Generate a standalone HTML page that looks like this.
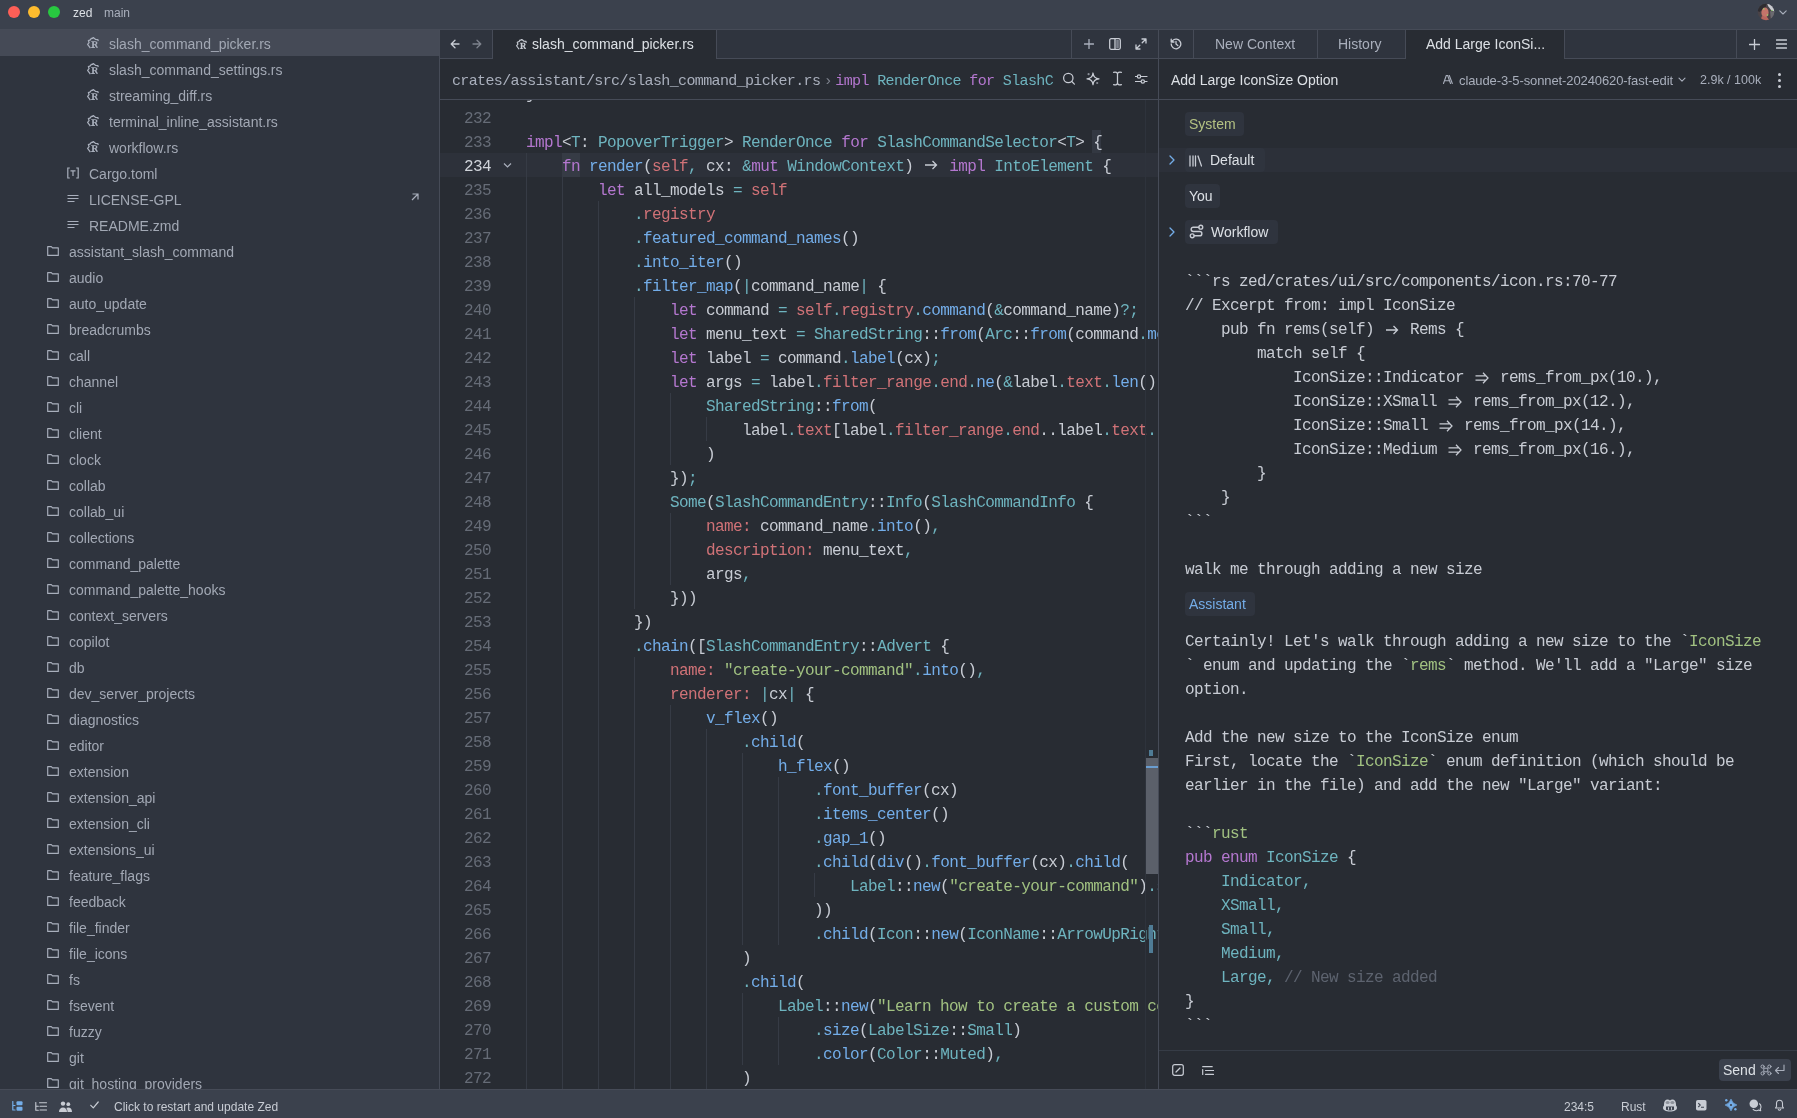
<!DOCTYPE html>
<html><head><meta charset="utf-8"><style>
*{box-sizing:border-box}
html,body{margin:0;padding:0;width:1797px;height:1118px;overflow:hidden;background:#282c33;font-family:"Liberation Sans",sans-serif;-webkit-font-smoothing:antialiased}
.abs{position:absolute}
svg.abs{display:block}
#title{will-change:transform;position:absolute;left:0;top:0;width:1797px;height:30px;background:#3b414d;border-bottom:1px solid #464b57}
.dot{position:absolute;top:6px;width:12px;height:12px;border-radius:50%}
#side{will-change:transform;position:absolute;left:0;top:30px;width:440px;height:1059px;background:#2f343e;border-right:1px solid #464b57;overflow:hidden}
.row{position:absolute;left:0;width:439px;height:26px}
.row.sel{background:#454a56}
.icw{position:absolute;top:7px;width:12px;height:12px}
.ic{display:block}
.nm{position:absolute;top:1px;line-height:26px;font-size:14px;color:#a2a8b4;white-space:nowrap}
#edtabs{will-change:transform;position:absolute;left:440px;top:30px;width:718px;height:29px;background:#2f343e;border-bottom:1px solid #464b57}
#edtool{will-change:transform;position:absolute;left:440px;top:59px;width:718px;height:41px;background:#282c33;border-bottom:1px solid #464b57}
#code{will-change:transform;position:absolute;left:440px;top:100px;width:718px;height:989px;background:#282c33;overflow:hidden;font-family:"Liberation Mono",monospace;font-size:16px;letter-spacing:-0.6px}
.mono14{font-family:"Liberation Mono",monospace;font-size:15px;letter-spacing:-0.63px;white-space:pre}
.cl{position:absolute;left:0;width:718px;height:24px;line-height:29px;white-space:pre;color:#c8ccd4}
.actbg{position:absolute;left:0;width:718px;height:24px;background:#2d313a}
.guide{position:absolute;width:1px;background:#363b45}
.ln{position:absolute;left:0;width:51px;text-align:right;color:#666c77}
.ln.act{color:#d0d4da}
.src{position:absolute;left:86px;top:0}
.lg{display:inline-block;width:18px;height:24px;vertical-align:top}
.lg svg{display:block;margin-top:1px}
.k{color:#b477cf}.f{color:#73ade9}.t{color:#6eb4bf}.p{color:#d07277}.s{color:#d07277}.o{color:#6eb4bf}.g{color:#a1c181}.c{color:#5d636f}
#divider{position:absolute;left:1158px;top:30px;width:1px;height:1059px;background:#464b57}
#rtabs{will-change:transform;position:absolute;left:1159px;top:30px;width:638px;height:29px;background:#2f343e;border-bottom:1px solid #464b57}
#rtool{will-change:transform;position:absolute;left:1159px;top:59px;width:638px;height:41px;background:#282c33;border-bottom:1px solid #464b57}
#rbody{will-change:transform;position:absolute;left:1159px;top:100px;width:638px;height:989px;background:#282c33;overflow:hidden}
.rl{position:absolute;left:26px;height:24px;line-height:24px;white-space:pre;font-family:"Liberation Mono",monospace;font-size:16px;letter-spacing:-0.6px;color:#c8ccd4}
.badge{position:absolute;height:24px;line-height:24px;padding-left:4px;border-radius:4px;background:#2f343e;font-size:14px;white-space:nowrap}
#status{will-change:transform;position:absolute;left:0;top:1089px;width:1797px;height:29px;background:#3b414d;border-top:1px solid #464b57}
.ui{font-size:14px;white-space:nowrap}
</style></head><body>
<div id="title">
 <div class="dot" style="left:8px;background:#fe5f57"></div>
 <div class="dot" style="left:28px;background:#febc2e"></div>
 <div class="dot" style="left:48px;background:#28c840"></div>
 <span class="abs" style="left:73px;top:0px;line-height:26px;color:#dce0e5;font-size:12px">zed</span>
 <span class="abs" style="left:104px;top:0px;line-height:26px;color:#a9afbc;font-size:12px">main</span>
 <svg class="abs" style="left:1757px;top:3px" width="18" height="18" viewBox="0 0 18 18"><defs><clipPath id="avc"><circle cx="9" cy="9" r="8.3"/></clipPath></defs><g clip-path="url(#avc)"><rect width="18" height="18" fill="#4a4347"/><path d="M0 0h10L8 6 2 9 0 7z" fill="#2e2c30"/><path d="M10 0h8v9l-4-2-3-4z" fill="#c9cbd1"/><ellipse cx="8" cy="9.5" rx="3.6" ry="5" fill="#c4746a"/><path d="M3 18l2-5 5 1 3 4z" fill="#b8665e"/><path d="M13 8l5 1v9h-4z" fill="#6b6a70"/><circle cx="6.8" cy="6" r=".8" fill="#8fdc6a"/><circle cx="10.5" cy="12" r=".8" fill="#8fdc6a"/><circle cx="15" cy="7.5" r=".7" fill="#8fdc6a"/></g></svg>
 <svg class="abs" style="left:1779px;top:10px" width="8" height="5" viewBox="0 0 8 5"><path d="M.8 .8l3.2 3.2 3.2-3.2" fill="none" stroke="#a9afbc" stroke-width="1.1" stroke-linecap="round" stroke-linejoin="round"/></svg>
</div>
<div id="side"><div class="row sel" style="top:0px"><span class="icw" style="left:87px"><svg class="ic" width="12" height="12" viewBox="0 0 12 12"><path d="M3.4 11.2L.6 7.4 2.1 5.7 1.4 3.6 3.3 2.8 4.3 1.3h1.3L6.2.4l1.2 1 1.2 1.1 2.3.1.3 1.6" fill="none" stroke="#a9afbc" stroke-width="1.25" stroke-linejoin="round"/><path d="M4.2 4.2h3.9c1.5 0 2.3.7 2.3 1.8 0 .9-.6 1.4-1.2 1.6l1.9 3.2H9.3L7.7 8.1H6.9v2h1v.8H4.2v-.8h1V5H4.2zM6.9 5v2.2h1.1c.6 0 .9-.4.9-1.1S8.6 5 8 5z" fill="#a9afbc"/></svg></span><span class="nm" style="left:109px">slash_command_picker.rs</span></div>
<div class="row" style="top:26px"><span class="icw" style="left:87px"><svg class="ic" width="12" height="12" viewBox="0 0 12 12"><path d="M3.4 11.2L.6 7.4 2.1 5.7 1.4 3.6 3.3 2.8 4.3 1.3h1.3L6.2.4l1.2 1 1.2 1.1 2.3.1.3 1.6" fill="none" stroke="#a9afbc" stroke-width="1.25" stroke-linejoin="round"/><path d="M4.2 4.2h3.9c1.5 0 2.3.7 2.3 1.8 0 .9-.6 1.4-1.2 1.6l1.9 3.2H9.3L7.7 8.1H6.9v2h1v.8H4.2v-.8h1V5H4.2zM6.9 5v2.2h1.1c.6 0 .9-.4.9-1.1S8.6 5 8 5z" fill="#a9afbc"/></svg></span><span class="nm" style="left:109px">slash_command_settings.rs</span></div>
<div class="row" style="top:52px"><span class="icw" style="left:87px"><svg class="ic" width="12" height="12" viewBox="0 0 12 12"><path d="M3.4 11.2L.6 7.4 2.1 5.7 1.4 3.6 3.3 2.8 4.3 1.3h1.3L6.2.4l1.2 1 1.2 1.1 2.3.1.3 1.6" fill="none" stroke="#a9afbc" stroke-width="1.25" stroke-linejoin="round"/><path d="M4.2 4.2h3.9c1.5 0 2.3.7 2.3 1.8 0 .9-.6 1.4-1.2 1.6l1.9 3.2H9.3L7.7 8.1H6.9v2h1v.8H4.2v-.8h1V5H4.2zM6.9 5v2.2h1.1c.6 0 .9-.4.9-1.1S8.6 5 8 5z" fill="#a9afbc"/></svg></span><span class="nm" style="left:109px">streaming_diff.rs</span></div>
<div class="row" style="top:78px"><span class="icw" style="left:87px"><svg class="ic" width="12" height="12" viewBox="0 0 12 12"><path d="M3.4 11.2L.6 7.4 2.1 5.7 1.4 3.6 3.3 2.8 4.3 1.3h1.3L6.2.4l1.2 1 1.2 1.1 2.3.1.3 1.6" fill="none" stroke="#a9afbc" stroke-width="1.25" stroke-linejoin="round"/><path d="M4.2 4.2h3.9c1.5 0 2.3.7 2.3 1.8 0 .9-.6 1.4-1.2 1.6l1.9 3.2H9.3L7.7 8.1H6.9v2h1v.8H4.2v-.8h1V5H4.2zM6.9 5v2.2h1.1c.6 0 .9-.4.9-1.1S8.6 5 8 5z" fill="#a9afbc"/></svg></span><span class="nm" style="left:109px">terminal_inline_assistant.rs</span></div>
<div class="row" style="top:104px"><span class="icw" style="left:87px"><svg class="ic" width="12" height="12" viewBox="0 0 12 12"><path d="M3.4 11.2L.6 7.4 2.1 5.7 1.4 3.6 3.3 2.8 4.3 1.3h1.3L6.2.4l1.2 1 1.2 1.1 2.3.1.3 1.6" fill="none" stroke="#a9afbc" stroke-width="1.25" stroke-linejoin="round"/><path d="M4.2 4.2h3.9c1.5 0 2.3.7 2.3 1.8 0 .9-.6 1.4-1.2 1.6l1.9 3.2H9.3L7.7 8.1H6.9v2h1v.8H4.2v-.8h1V5H4.2zM6.9 5v2.2h1.1c.6 0 .9-.4.9-1.1S8.6 5 8 5z" fill="#a9afbc"/></svg></span><span class="nm" style="left:109px">workflow.rs</span></div>
<div class="row" style="top:130px"><span class="icw" style="left:67px"><svg class="ic" width="12" height="12" viewBox="0 0 12 12"><path d="M2.8 1H.8v10h2M9.2 1h2v10h-2M3.5 3.8h5M6 3.8V9" fill="none" stroke="#a9afbc" stroke-width="1.2"/></svg></span><span class="nm" style="left:89px">Cargo.toml</span></div>
<div class="row" style="top:156px"><span class="icw" style="left:67px"><svg class="ic" width="12" height="12" viewBox="0 0 12 12"><path d="M.5 2.5h11M.5 5.5h11M.5 8.5h7" fill="none" stroke="#a9afbc" stroke-width="1.2"/></svg></span><span class="nm" style="left:89px">LICENSE-GPL</span><svg style="position:absolute;left:411px;top:7px" width="8" height="8" viewBox="0 0 8 8"><path d="M1 7L7 1M1.5 1H7v5.5" fill="none" stroke="#a9afbc" stroke-width="1.2"/></svg></div>
<div class="row" style="top:182px"><span class="icw" style="left:67px"><svg class="ic" width="12" height="12" viewBox="0 0 12 12"><path d="M.5 2.5h11M.5 5.5h11M.5 8.5h7" fill="none" stroke="#a9afbc" stroke-width="1.2"/></svg></span><span class="nm" style="left:89px">README.zmd</span></div>
<div class="row" style="top:208px"><span class="icw" style="left:47px"><svg class="ic" width="12" height="12" viewBox="0 0 12 12"><path d="M.7 1.6h3.6l1.2 1.3h5.8v7.5H.7z" fill="none" stroke="#a9afbc" stroke-width="1.15" stroke-linejoin="round"/></svg></span><span class="nm" style="left:69px">assistant_slash_command</span></div>
<div class="row" style="top:234px"><span class="icw" style="left:47px"><svg class="ic" width="12" height="12" viewBox="0 0 12 12"><path d="M.7 1.6h3.6l1.2 1.3h5.8v7.5H.7z" fill="none" stroke="#a9afbc" stroke-width="1.15" stroke-linejoin="round"/></svg></span><span class="nm" style="left:69px">audio</span></div>
<div class="row" style="top:260px"><span class="icw" style="left:47px"><svg class="ic" width="12" height="12" viewBox="0 0 12 12"><path d="M.7 1.6h3.6l1.2 1.3h5.8v7.5H.7z" fill="none" stroke="#a9afbc" stroke-width="1.15" stroke-linejoin="round"/></svg></span><span class="nm" style="left:69px">auto_update</span></div>
<div class="row" style="top:286px"><span class="icw" style="left:47px"><svg class="ic" width="12" height="12" viewBox="0 0 12 12"><path d="M.7 1.6h3.6l1.2 1.3h5.8v7.5H.7z" fill="none" stroke="#a9afbc" stroke-width="1.15" stroke-linejoin="round"/></svg></span><span class="nm" style="left:69px">breadcrumbs</span></div>
<div class="row" style="top:312px"><span class="icw" style="left:47px"><svg class="ic" width="12" height="12" viewBox="0 0 12 12"><path d="M.7 1.6h3.6l1.2 1.3h5.8v7.5H.7z" fill="none" stroke="#a9afbc" stroke-width="1.15" stroke-linejoin="round"/></svg></span><span class="nm" style="left:69px">call</span></div>
<div class="row" style="top:338px"><span class="icw" style="left:47px"><svg class="ic" width="12" height="12" viewBox="0 0 12 12"><path d="M.7 1.6h3.6l1.2 1.3h5.8v7.5H.7z" fill="none" stroke="#a9afbc" stroke-width="1.15" stroke-linejoin="round"/></svg></span><span class="nm" style="left:69px">channel</span></div>
<div class="row" style="top:364px"><span class="icw" style="left:47px"><svg class="ic" width="12" height="12" viewBox="0 0 12 12"><path d="M.7 1.6h3.6l1.2 1.3h5.8v7.5H.7z" fill="none" stroke="#a9afbc" stroke-width="1.15" stroke-linejoin="round"/></svg></span><span class="nm" style="left:69px">cli</span></div>
<div class="row" style="top:390px"><span class="icw" style="left:47px"><svg class="ic" width="12" height="12" viewBox="0 0 12 12"><path d="M.7 1.6h3.6l1.2 1.3h5.8v7.5H.7z" fill="none" stroke="#a9afbc" stroke-width="1.15" stroke-linejoin="round"/></svg></span><span class="nm" style="left:69px">client</span></div>
<div class="row" style="top:416px"><span class="icw" style="left:47px"><svg class="ic" width="12" height="12" viewBox="0 0 12 12"><path d="M.7 1.6h3.6l1.2 1.3h5.8v7.5H.7z" fill="none" stroke="#a9afbc" stroke-width="1.15" stroke-linejoin="round"/></svg></span><span class="nm" style="left:69px">clock</span></div>
<div class="row" style="top:442px"><span class="icw" style="left:47px"><svg class="ic" width="12" height="12" viewBox="0 0 12 12"><path d="M.7 1.6h3.6l1.2 1.3h5.8v7.5H.7z" fill="none" stroke="#a9afbc" stroke-width="1.15" stroke-linejoin="round"/></svg></span><span class="nm" style="left:69px">collab</span></div>
<div class="row" style="top:468px"><span class="icw" style="left:47px"><svg class="ic" width="12" height="12" viewBox="0 0 12 12"><path d="M.7 1.6h3.6l1.2 1.3h5.8v7.5H.7z" fill="none" stroke="#a9afbc" stroke-width="1.15" stroke-linejoin="round"/></svg></span><span class="nm" style="left:69px">collab_ui</span></div>
<div class="row" style="top:494px"><span class="icw" style="left:47px"><svg class="ic" width="12" height="12" viewBox="0 0 12 12"><path d="M.7 1.6h3.6l1.2 1.3h5.8v7.5H.7z" fill="none" stroke="#a9afbc" stroke-width="1.15" stroke-linejoin="round"/></svg></span><span class="nm" style="left:69px">collections</span></div>
<div class="row" style="top:520px"><span class="icw" style="left:47px"><svg class="ic" width="12" height="12" viewBox="0 0 12 12"><path d="M.7 1.6h3.6l1.2 1.3h5.8v7.5H.7z" fill="none" stroke="#a9afbc" stroke-width="1.15" stroke-linejoin="round"/></svg></span><span class="nm" style="left:69px">command_palette</span></div>
<div class="row" style="top:546px"><span class="icw" style="left:47px"><svg class="ic" width="12" height="12" viewBox="0 0 12 12"><path d="M.7 1.6h3.6l1.2 1.3h5.8v7.5H.7z" fill="none" stroke="#a9afbc" stroke-width="1.15" stroke-linejoin="round"/></svg></span><span class="nm" style="left:69px">command_palette_hooks</span></div>
<div class="row" style="top:572px"><span class="icw" style="left:47px"><svg class="ic" width="12" height="12" viewBox="0 0 12 12"><path d="M.7 1.6h3.6l1.2 1.3h5.8v7.5H.7z" fill="none" stroke="#a9afbc" stroke-width="1.15" stroke-linejoin="round"/></svg></span><span class="nm" style="left:69px">context_servers</span></div>
<div class="row" style="top:598px"><span class="icw" style="left:47px"><svg class="ic" width="12" height="12" viewBox="0 0 12 12"><path d="M.7 1.6h3.6l1.2 1.3h5.8v7.5H.7z" fill="none" stroke="#a9afbc" stroke-width="1.15" stroke-linejoin="round"/></svg></span><span class="nm" style="left:69px">copilot</span></div>
<div class="row" style="top:624px"><span class="icw" style="left:47px"><svg class="ic" width="12" height="12" viewBox="0 0 12 12"><path d="M.7 1.6h3.6l1.2 1.3h5.8v7.5H.7z" fill="none" stroke="#a9afbc" stroke-width="1.15" stroke-linejoin="round"/></svg></span><span class="nm" style="left:69px">db</span></div>
<div class="row" style="top:650px"><span class="icw" style="left:47px"><svg class="ic" width="12" height="12" viewBox="0 0 12 12"><path d="M.7 1.6h3.6l1.2 1.3h5.8v7.5H.7z" fill="none" stroke="#a9afbc" stroke-width="1.15" stroke-linejoin="round"/></svg></span><span class="nm" style="left:69px">dev_server_projects</span></div>
<div class="row" style="top:676px"><span class="icw" style="left:47px"><svg class="ic" width="12" height="12" viewBox="0 0 12 12"><path d="M.7 1.6h3.6l1.2 1.3h5.8v7.5H.7z" fill="none" stroke="#a9afbc" stroke-width="1.15" stroke-linejoin="round"/></svg></span><span class="nm" style="left:69px">diagnostics</span></div>
<div class="row" style="top:702px"><span class="icw" style="left:47px"><svg class="ic" width="12" height="12" viewBox="0 0 12 12"><path d="M.7 1.6h3.6l1.2 1.3h5.8v7.5H.7z" fill="none" stroke="#a9afbc" stroke-width="1.15" stroke-linejoin="round"/></svg></span><span class="nm" style="left:69px">editor</span></div>
<div class="row" style="top:728px"><span class="icw" style="left:47px"><svg class="ic" width="12" height="12" viewBox="0 0 12 12"><path d="M.7 1.6h3.6l1.2 1.3h5.8v7.5H.7z" fill="none" stroke="#a9afbc" stroke-width="1.15" stroke-linejoin="round"/></svg></span><span class="nm" style="left:69px">extension</span></div>
<div class="row" style="top:754px"><span class="icw" style="left:47px"><svg class="ic" width="12" height="12" viewBox="0 0 12 12"><path d="M.7 1.6h3.6l1.2 1.3h5.8v7.5H.7z" fill="none" stroke="#a9afbc" stroke-width="1.15" stroke-linejoin="round"/></svg></span><span class="nm" style="left:69px">extension_api</span></div>
<div class="row" style="top:780px"><span class="icw" style="left:47px"><svg class="ic" width="12" height="12" viewBox="0 0 12 12"><path d="M.7 1.6h3.6l1.2 1.3h5.8v7.5H.7z" fill="none" stroke="#a9afbc" stroke-width="1.15" stroke-linejoin="round"/></svg></span><span class="nm" style="left:69px">extension_cli</span></div>
<div class="row" style="top:806px"><span class="icw" style="left:47px"><svg class="ic" width="12" height="12" viewBox="0 0 12 12"><path d="M.7 1.6h3.6l1.2 1.3h5.8v7.5H.7z" fill="none" stroke="#a9afbc" stroke-width="1.15" stroke-linejoin="round"/></svg></span><span class="nm" style="left:69px">extensions_ui</span></div>
<div class="row" style="top:832px"><span class="icw" style="left:47px"><svg class="ic" width="12" height="12" viewBox="0 0 12 12"><path d="M.7 1.6h3.6l1.2 1.3h5.8v7.5H.7z" fill="none" stroke="#a9afbc" stroke-width="1.15" stroke-linejoin="round"/></svg></span><span class="nm" style="left:69px">feature_flags</span></div>
<div class="row" style="top:858px"><span class="icw" style="left:47px"><svg class="ic" width="12" height="12" viewBox="0 0 12 12"><path d="M.7 1.6h3.6l1.2 1.3h5.8v7.5H.7z" fill="none" stroke="#a9afbc" stroke-width="1.15" stroke-linejoin="round"/></svg></span><span class="nm" style="left:69px">feedback</span></div>
<div class="row" style="top:884px"><span class="icw" style="left:47px"><svg class="ic" width="12" height="12" viewBox="0 0 12 12"><path d="M.7 1.6h3.6l1.2 1.3h5.8v7.5H.7z" fill="none" stroke="#a9afbc" stroke-width="1.15" stroke-linejoin="round"/></svg></span><span class="nm" style="left:69px">file_finder</span></div>
<div class="row" style="top:910px"><span class="icw" style="left:47px"><svg class="ic" width="12" height="12" viewBox="0 0 12 12"><path d="M.7 1.6h3.6l1.2 1.3h5.8v7.5H.7z" fill="none" stroke="#a9afbc" stroke-width="1.15" stroke-linejoin="round"/></svg></span><span class="nm" style="left:69px">file_icons</span></div>
<div class="row" style="top:936px"><span class="icw" style="left:47px"><svg class="ic" width="12" height="12" viewBox="0 0 12 12"><path d="M.7 1.6h3.6l1.2 1.3h5.8v7.5H.7z" fill="none" stroke="#a9afbc" stroke-width="1.15" stroke-linejoin="round"/></svg></span><span class="nm" style="left:69px">fs</span></div>
<div class="row" style="top:962px"><span class="icw" style="left:47px"><svg class="ic" width="12" height="12" viewBox="0 0 12 12"><path d="M.7 1.6h3.6l1.2 1.3h5.8v7.5H.7z" fill="none" stroke="#a9afbc" stroke-width="1.15" stroke-linejoin="round"/></svg></span><span class="nm" style="left:69px">fsevent</span></div>
<div class="row" style="top:988px"><span class="icw" style="left:47px"><svg class="ic" width="12" height="12" viewBox="0 0 12 12"><path d="M.7 1.6h3.6l1.2 1.3h5.8v7.5H.7z" fill="none" stroke="#a9afbc" stroke-width="1.15" stroke-linejoin="round"/></svg></span><span class="nm" style="left:69px">fuzzy</span></div>
<div class="row" style="top:1014px"><span class="icw" style="left:47px"><svg class="ic" width="12" height="12" viewBox="0 0 12 12"><path d="M.7 1.6h3.6l1.2 1.3h5.8v7.5H.7z" fill="none" stroke="#a9afbc" stroke-width="1.15" stroke-linejoin="round"/></svg></span><span class="nm" style="left:69px">git</span></div>
<div class="row" style="top:1040px"><span class="icw" style="left:47px"><svg class="ic" width="12" height="12" viewBox="0 0 12 12"><path d="M.7 1.6h3.6l1.2 1.3h5.8v7.5H.7z" fill="none" stroke="#a9afbc" stroke-width="1.15" stroke-linejoin="round"/></svg></span><span class="nm" style="left:69px">git_hosting_providers</span></div></div>
<div id="edtabs"><svg class="abs" style="left:10px;top:9px" width="10" height="10" viewBox="0 0 10 10"><path d="M9 5H1.5M5 1.2L1.2 5 5 8.8" fill="none" stroke="#c8ccd4" stroke-width="1.3" stroke-linecap="round" stroke-linejoin="round"/></svg>
<svg class="abs" style="left:32px;top:9px" width="10" height="10" viewBox="0 0 10 10"><path d="M1 5h7.5M5 1.2L8.8 5 5 8.8" fill="none" stroke="#7d828d" stroke-width="1.3" stroke-linecap="round" stroke-linejoin="round"/></svg>
<div class="abs" style="left:52px;top:0;width:1px;height:28px;background:#464b57"></div>
<div class="abs" style="left:53px;top:0;width:224px;height:29px;background:#282c33;border-right:1px solid #464b57"></div>
<span class="abs" style="left:76px;top:9px"><svg class="ic" width="11" height="11" viewBox="0 0 12 12"><path d="M3.4 11.2L.6 7.4 2.1 5.7 1.4 3.6 3.3 2.8 4.3 1.3h1.3L6.2.4l1.2 1 1.2 1.1 2.3.1.3 1.6" fill="none" stroke="#c8ccd4" stroke-width="1.25" stroke-linejoin="round"/><path d="M4.2 4.2h3.9c1.5 0 2.3.7 2.3 1.8 0 .9-.6 1.4-1.2 1.6l1.9 3.2H9.3L7.7 8.1H6.9v2h1v.8H4.2v-.8h1V5H4.2zM6.9 5v2.2h1.1c.6 0 .9-.4.9-1.1S8.6 5 8 5z" fill="#c8ccd4"/></svg></span>
<span class="abs ui" style="left:92px;top:0;line-height:28px;color:#dce0e5">slash_command_picker.rs</span>
<div class="abs" style="left:631px;top:0;width:1px;height:28px;background:#464b57"></div>
<svg class="abs" style="left:644px;top:9px" width="10" height="10" viewBox="0 0 10 10"><path d="M5 .5v9M.5 5h9" fill="none" stroke="#a9afbc" stroke-width="1.3" stroke-linecap="round" stroke-linejoin="round"/></svg>
<svg class="abs" style="left:669px;top:8px" width="12" height="12" viewBox="0 0 12 12"><rect x=".7" y=".7" width="10.6" height="10.6" rx="1.5" fill="none" stroke="#c8ccd4" stroke-width="1.3" stroke-linecap="round" stroke-linejoin="round"/><path d="M6 1v10" fill="none" stroke="#c8ccd4" stroke-width="1.3" stroke-linecap="round" stroke-linejoin="round"/><rect x="7.2" y="2" width="2.6" height="8" fill="#7d828d"/></svg>
<svg class="abs" style="left:695px;top:8px" width="12" height="12" viewBox="0 0 12 12"><path d="M7 1h4v4M11 1L7.2 4.8M5 11H1V7M1 11l3.8-3.8" fill="none" stroke="#c8ccd4" stroke-width="1.3" stroke-linecap="round" stroke-linejoin="round"/></svg></div>
<div id="edtool"><span class="abs mono14" style="left:12px;top:2px;line-height:41px;color:#a9afbc">crates/assistant/src/slash_command_picker.rs<span style="display:inline-block;width:15px;text-align:center;color:#7d828d">&#8250;</span><span class="k">impl</span> <span class="t">RenderOnce</span> <span class="k">for</span> <span class="t">SlashC</span></span>
<svg class="abs" style="left:622px;top:12px" width="14" height="14" viewBox="0 0 14 14"><circle cx="6.3" cy="7" r="4.7" fill="none" stroke="#c8ccd4" stroke-width="1.25" stroke-linecap="round" stroke-linejoin="round"/><path d="M9.8 10.5l2.6 2.6" fill="none" stroke="#c8ccd4" stroke-width="1.25" stroke-linecap="round" stroke-linejoin="round"/></svg>
<svg class="abs" style="left:646px;top:13px" width="14" height="14" viewBox="0 0 14 14"><path d="M7 1C7.3 4.6 9.3 6.5 13 6.8 9.3 7.1 7.3 9 7 12.6 6.7 9 4.7 7.1 1 6.8 4.7 6.5 6.7 4.6 7 1z" fill="none" stroke="#c8ccd4" stroke-width="1.25" stroke-linejoin="round"/><circle cx="2.6" cy="2.2" r="1.1" fill="#8a8f99"/><circle cx="11.2" cy="11" r="1.1" fill="#8a8f99"/></svg>
<svg class="abs" style="left:673px;top:12px" width="9" height="15" viewBox="0 0 9 15"><path d="M.6 1.3C3 .8 4.5 1.5 4.5 3.2 4.5 1.5 6 .8 8.4 1.3M4.5 3.2v8.6M.6 13.7C3 14.2 4.5 13.5 4.5 11.8 4.5 13.5 6 14.2 8.4 13.7" fill="none" stroke="#c8ccd4" stroke-width="1.25" stroke-linecap="round" stroke-linejoin="round"/></svg>
<svg class="abs" style="left:695px;top:13px" width="14" height="14" viewBox="0 0 14 14"><path d="M0 4.5h2.3M5.7 4.5H12M0 9.5h6M9.6 9.5H12" fill="none" stroke="#c8ccd4" stroke-width="1.2" stroke-linecap="round" stroke-linejoin="round"/><circle cx="4" cy="4.5" r="1.7" fill="none" stroke="#c8ccd4" stroke-width="1.2" stroke-linecap="round" stroke-linejoin="round"/><circle cx="7.8" cy="9.5" r="1.7" fill="none" stroke="#c8ccd4" stroke-width="1.2" stroke-linecap="round" stroke-linejoin="round"/></svg></div>
<div id="code"><div class="actbg" style="top:53px"></div>
<div class="abs" style="left:122px;top:53px;width:18px;height:24px;background:#363b45"></div>
<div class="abs" style="left:652px;top:30px;width:9px;height:23px;background:#333842"></div>
<div class="guide" style="left:86px;top:53px;height:936px"></div>
<div class="guide" style="left:122px;top:77px;height:912px"></div>
<div class="guide" style="left:158px;top:101px;height:888px"></div>
<div class="guide" style="left:194px;top:197px;height:312px"></div>
<div class="guide" style="left:230px;top:293px;height:72px"></div>
<div class="guide" style="left:266px;top:317px;height:24px"></div>
<div class="guide" style="left:230px;top:413px;height:72px"></div>
<div class="guide" style="left:194px;top:557px;height:432px"></div>
<div class="guide" style="left:230px;top:605px;height:384px"></div>
<div class="guide" style="left:266px;top:629px;height:360px"></div>
<div class="guide" style="left:302px;top:653px;height:192px"></div>
<div class="guide" style="left:338px;top:677px;height:168px"></div>
<div class="guide" style="left:374px;top:773px;height:24px"></div>
<div class="guide" style="left:302px;top:893px;height:72px"></div>
<div class="guide" style="left:338px;top:917px;height:48px"></div>
<div class="cl" style="top:-19px"><span class="src">}</span></div>
<div class="cl" style="top:5px"><span class="ln">232</span><span class="src"></span></div>
<div class="cl" style="top:29px"><span class="ln">233</span><span class="src"><span class="k">impl</span>&lt;<span class="t">T</span>: <span class="t">PopoverTrigger</span>&gt; <span class="t">RenderOnce</span> <span class="k">for</span> <span class="t">SlashCommandSelector</span>&lt;<span class="t">T</span>&gt; {</span></div>
<div class="cl" style="top:53px"><span class="ln act">234</span><span class="src">    <span class="k">fn</span> <span class="f">render</span>(<span class="s">self</span><span class="o">,</span> cx: <span class="o">&amp;</span><span class="k">mut</span> <span class="t">WindowContext</span>) <span class="lg"><svg width="18" height="24" viewBox="0 0 18 24"><path d="M3 11h11.5M10.5 7l4 4-4 4" fill="none" stroke="currentColor" stroke-width="1.3"/></svg></span> <span class="k">impl</span> <span class="t">IntoElement</span> {</span></div>
<div class="cl" style="top:77px"><span class="ln">235</span><span class="src">        <span class="k">let</span> all_models <span class="o">=</span> <span class="s">self</span></span></div>
<div class="cl" style="top:101px"><span class="ln">236</span><span class="src">            <span class="o">.</span><span class="p">registry</span></span></div>
<div class="cl" style="top:125px"><span class="ln">237</span><span class="src">            <span class="o">.</span><span class="f">featured_command_names</span>()</span></div>
<div class="cl" style="top:149px"><span class="ln">238</span><span class="src">            <span class="o">.</span><span class="f">into_iter</span>()</span></div>
<div class="cl" style="top:173px"><span class="ln">239</span><span class="src">            <span class="o">.</span><span class="f">filter_map</span>(<span class="o">|</span>command_name<span class="o">|</span> {</span></div>
<div class="cl" style="top:197px"><span class="ln">240</span><span class="src">                <span class="k">let</span> command <span class="o">=</span> <span class="s">self</span><span class="o">.</span><span class="p">registry</span><span class="o">.</span><span class="f">command</span>(<span class="o">&amp;</span>command_name)<span class="o">?</span><span class="o">;</span></span></div>
<div class="cl" style="top:221px"><span class="ln">241</span><span class="src">                <span class="k">let</span> menu_text <span class="o">=</span> <span class="t">SharedString</span>::<span class="f">from</span>(<span class="t">Arc</span>::<span class="f">from</span>(command<span class="o">.</span><span class="f">menu_text</span>()))<span class="o">;</span></span></div>
<div class="cl" style="top:245px"><span class="ln">242</span><span class="src">                <span class="k">let</span> label <span class="o">=</span> command<span class="o">.</span><span class="f">label</span>(cx)<span class="o">;</span></span></div>
<div class="cl" style="top:269px"><span class="ln">243</span><span class="src">                <span class="k">let</span> args <span class="o">=</span> label<span class="o">.</span><span class="p">filter_range</span><span class="o">.</span><span class="p">end</span><span class="o">.</span><span class="f">ne</span>(<span class="o">&amp;</span>label<span class="o">.</span><span class="p">text</span><span class="o">.</span><span class="f">len</span>()).then(|| {</span></div>
<div class="cl" style="top:293px"><span class="ln">244</span><span class="src">                    <span class="t">SharedString</span>::<span class="f">from</span>(</span></div>
<div class="cl" style="top:317px"><span class="ln">245</span><span class="src">                        label<span class="o">.</span><span class="p">text</span>[label<span class="o">.</span><span class="p">filter_range</span><span class="o">.</span><span class="p">end</span>..label<span class="o">.</span><span class="p">text</span><span class="o">.</span><span class="f">len</span>()]</span></div>
<div class="cl" style="top:341px"><span class="ln">246</span><span class="src">                    )</span></div>
<div class="cl" style="top:365px"><span class="ln">247</span><span class="src">                })<span class="o">;</span></span></div>
<div class="cl" style="top:389px"><span class="ln">248</span><span class="src">                <span class="t">Some</span>(<span class="t">SlashCommandEntry</span>::<span class="t">Info</span>(<span class="t">SlashCommandInfo</span> {</span></div>
<div class="cl" style="top:413px"><span class="ln">249</span><span class="src">                    <span class="p">name:</span> command_name<span class="o">.</span><span class="f">into</span>()<span class="o">,</span></span></div>
<div class="cl" style="top:437px"><span class="ln">250</span><span class="src">                    <span class="p">description:</span> menu_text<span class="o">,</span></span></div>
<div class="cl" style="top:461px"><span class="ln">251</span><span class="src">                    args<span class="o">,</span></span></div>
<div class="cl" style="top:485px"><span class="ln">252</span><span class="src">                }))</span></div>
<div class="cl" style="top:509px"><span class="ln">253</span><span class="src">            })</span></div>
<div class="cl" style="top:533px"><span class="ln">254</span><span class="src">            <span class="o">.</span><span class="f">chain</span>([<span class="t">SlashCommandEntry</span>::<span class="t">Advert</span> {</span></div>
<div class="cl" style="top:557px"><span class="ln">255</span><span class="src">                <span class="p">name:</span> <span class="g">"create-your-command"</span><span class="o">.</span><span class="f">into</span>()<span class="o">,</span></span></div>
<div class="cl" style="top:581px"><span class="ln">256</span><span class="src">                <span class="p">renderer:</span> <span class="o">|</span>cx<span class="o">|</span> {</span></div>
<div class="cl" style="top:605px"><span class="ln">257</span><span class="src">                    <span class="f">v_flex</span>()</span></div>
<div class="cl" style="top:629px"><span class="ln">258</span><span class="src">                        <span class="o">.</span><span class="f">child</span>(</span></div>
<div class="cl" style="top:653px"><span class="ln">259</span><span class="src">                            <span class="f">h_flex</span>()</span></div>
<div class="cl" style="top:677px"><span class="ln">260</span><span class="src">                                <span class="o">.</span><span class="f">font_buffer</span>(cx)</span></div>
<div class="cl" style="top:701px"><span class="ln">261</span><span class="src">                                <span class="o">.</span><span class="f">items_center</span>()</span></div>
<div class="cl" style="top:725px"><span class="ln">262</span><span class="src">                                <span class="o">.</span><span class="f">gap_1</span>()</span></div>
<div class="cl" style="top:749px"><span class="ln">263</span><span class="src">                                <span class="o">.</span><span class="f">child</span>(<span class="f">div</span>()<span class="o">.</span><span class="f">font_buffer</span>(cx)<span class="o">.</span><span class="f">child</span>(</span></div>
<div class="cl" style="top:773px"><span class="ln">264</span><span class="src">                                    <span class="t">Label</span>::<span class="f">new</span>(<span class="g">"create-your-command"</span>)<span class="o">.</span><span class="f">size</span>(LabelSize::Small)</span></div>
<div class="cl" style="top:797px"><span class="ln">265</span><span class="src">                                ))</span></div>
<div class="cl" style="top:821px"><span class="ln">266</span><span class="src">                                <span class="o">.</span><span class="f">child</span>(<span class="t">Icon</span>::<span class="f">new</span>(<span class="t">IconName</span>::<span class="t">ArrowUpRight</span>))</span></div>
<div class="cl" style="top:845px"><span class="ln">267</span><span class="src">                        )</span></div>
<div class="cl" style="top:869px"><span class="ln">268</span><span class="src">                        <span class="o">.</span><span class="f">child</span>(</span></div>
<div class="cl" style="top:893px"><span class="ln">269</span><span class="src">                            <span class="t">Label</span>::<span class="f">new</span>(<span class="g">"Learn how to create a custom command"</span>)</span></div>
<div class="cl" style="top:917px"><span class="ln">270</span><span class="src">                                <span class="o">.</span><span class="f">size</span>(<span class="t">LabelSize</span>::<span class="t">Small</span>)</span></div>
<div class="cl" style="top:941px"><span class="ln">271</span><span class="src">                                <span class="o">.</span><span class="f">color</span>(<span class="t">Color</span>::<span class="t">Muted</span>)<span class="o">,</span></span></div>
<div class="cl" style="top:965px"><span class="ln">272</span><span class="src">                        )</span></div>
<svg class="abs" style="left:63px;top:61px" width="9" height="8" viewBox="0 0 9 8"><path d="M1 2.5l3.5 3.5L8 2.5" fill="none" stroke="#a9afbc" stroke-width="1.2"/></svg>
<div class="abs" style="left:705px;top:0;width:1px;height:989px;background:#2e333c"></div>
<div class="abs" style="left:706px;top:658px;width:12px;height:116px;background:#5b606a"></div>
<div class="abs" style="left:709px;top:650px;width:4px;height:6px;background:#4f7c96"></div>
<div class="abs" style="left:706px;top:666px;width:12px;height:2px;background:#6a9dd0"></div>
<div class="abs" style="left:709px;top:825px;width:4px;height:28px;background:#4f7c96"></div></div>
<div id="divider"></div>
<div id="rtabs"><svg class="abs" style="left:11px;top:8px" width="12" height="12" viewBox="0 0 12 12"><path d="M1.2 6a4.8 4.8 0 1 0 1.4-3.4L1.2 4M1.2 1.2V4H4M6 3.3V6l1.8 1.5" fill="none" stroke="#c8ccd4" stroke-width="1.3" stroke-linecap="round" stroke-linejoin="round"/></svg>
<div class="abs" style="left:34px;top:0;width:1px;height:28px;background:#464b57"></div>
<span class="abs ui" style="left:56px;top:0;line-height:28px;color:#a9afbc">New Context</span>
<div class="abs" style="left:158px;top:0;width:1px;height:28px;background:#464b57"></div>
<span class="abs ui" style="left:179px;top:0;line-height:28px;color:#a9afbc">History</span>
<div class="abs" style="left:246px;top:0;width:160px;height:29px;background:#282c33;border-left:1px solid #464b57;border-right:1px solid #464b57"></div>
<span class="abs ui" style="left:267px;top:0;line-height:28px;color:#dce0e5">Add Large IconSi...</span>
<div class="abs" style="left:577px;top:0;width:1px;height:28px;background:#464b57"></div>
<svg class="abs" style="left:590px;top:9px" width="11" height="11" viewBox="0 0 11 11"><path d="M5.5 .5v10M.5 5.5h10" fill="none" stroke="#c8ccd4" stroke-width="1.3" stroke-linecap="round" stroke-linejoin="round"/></svg>
<svg class="abs" style="left:617px;top:9px" width="11" height="10" viewBox="0 0 11 10"><path d="M.5 1h10M.5 5h10M.5 9h10" fill="none" stroke="#c8ccd4" stroke-width="1.3" stroke-linecap="round" stroke-linejoin="round"/></svg></div>
<div id="rtool"><span class="abs ui" style="left:12px;top:1px;line-height:41px;color:#dce0e5">Add Large IconSize Option</span>
<svg class="abs" style="left:284px;top:16px" width="11" height="9" viewBox="0 0 11 9"><path d="M.5 8.5L3.3.5h1.4l2.8 8M1.6 5.8h4.8M6.3.5l3 8" fill="none" stroke="#a9afbc" stroke-width="1.1" stroke-linecap="round" stroke-linejoin="round"/></svg>
<span class="abs" style="left:300px;top:1px;line-height:41px;color:#a9afbc;font-size:13px;white-space:nowrap;letter-spacing:-0.1px">claude-3-5-sonnet-20240620-fast-edit</span>
<svg class="abs" style="left:519px;top:18px" width="8" height="6" viewBox="0 0 8 6"><path d="M1 1.2l3 3 3-3" fill="none" stroke="#a9afbc" stroke-width="1.1" stroke-linecap="round" stroke-linejoin="round"/></svg>
<span class="abs" style="left:541px;top:1px;line-height:41px;color:#a9afbc;font-size:12.5px;white-space:nowrap">2.9k / 100k</span>
<div class="abs" style="left:619px;top:14px;width:3px;height:3px;border-radius:50%;background:#c8ccd4"></div>
<div class="abs" style="left:619px;top:20px;width:3px;height:3px;border-radius:50%;background:#c8ccd4"></div>
<div class="abs" style="left:619px;top:26px;width:3px;height:3px;border-radius:50%;background:#c8ccd4"></div></div>
<div id="rbody"><div class="rl" style="top:170px">```rs zed/crates/ui/src/components/icon.rs:70-77</div>
<div class="rl" style="top:194px">// Excerpt from: impl IconSize</div>
<div class="rl" style="top:218px">    pub fn rems(self) <span class="lg"><svg width="18" height="24" viewBox="0 0 18 24"><path d="M3 11h11.5M10.5 7l4 4-4 4" fill="none" stroke="currentColor" stroke-width="1.3"/></svg></span> Rems {</div>
<div class="rl" style="top:242px">        match self {</div>
<div class="rl" style="top:266px">            IconSize::Indicator <span class="lg"><svg width="18" height="24" viewBox="0 0 18 24"><path d="M2.5 8.8h10.5M2.5 13.2h10.5M10 5.8l5 5.2-5 5.2" fill="none" stroke="currentColor" stroke-width="1.25"/></svg></span> rems_from_px(10.),</div>
<div class="rl" style="top:290px">            IconSize::XSmall <span class="lg"><svg width="18" height="24" viewBox="0 0 18 24"><path d="M2.5 8.8h10.5M2.5 13.2h10.5M10 5.8l5 5.2-5 5.2" fill="none" stroke="currentColor" stroke-width="1.25"/></svg></span> rems_from_px(12.),</div>
<div class="rl" style="top:314px">            IconSize::Small <span class="lg"><svg width="18" height="24" viewBox="0 0 18 24"><path d="M2.5 8.8h10.5M2.5 13.2h10.5M10 5.8l5 5.2-5 5.2" fill="none" stroke="currentColor" stroke-width="1.25"/></svg></span> rems_from_px(14.),</div>
<div class="rl" style="top:338px">            IconSize::Medium <span class="lg"><svg width="18" height="24" viewBox="0 0 18 24"><path d="M2.5 8.8h10.5M2.5 13.2h10.5M10 5.8l5 5.2-5 5.2" fill="none" stroke="currentColor" stroke-width="1.25"/></svg></span> rems_from_px(16.),</div>
<div class="rl" style="top:362px">        }</div>
<div class="rl" style="top:386px">    }</div>
<div class="rl" style="top:410px">```</div>
<div class="rl" style="top:458px">walk me through adding a new size</div>
<div class="rl" style="top:530px">Certainly! Let's walk through adding a new size to the `<span class="g">IconSize</span></div>
<div class="rl" style="top:554px">` enum and updating the `<span class="g">rems</span>` method. We'll add a "Large" size</div>
<div class="rl" style="top:578px">option.</div>
<div class="rl" style="top:626px">Add the new size to the IconSize enum</div>
<div class="rl" style="top:650px">First, locate the `<span class="g">IconSize</span>` enum definition (which should be</div>
<div class="rl" style="top:674px">earlier in the file) and add the new "Large" variant:</div>
<div class="rl" style="top:722px">```<span class="g">rust</span></div>
<div class="rl" style="top:746px"><span class="k">pub</span> <span class="k">enum</span> <span class="t">IconSize</span> {</div>
<div class="rl" style="top:770px">    <span class="t">Indicator</span><span class="o">,</span></div>
<div class="rl" style="top:794px">    <span class="t">XSmall</span><span class="o">,</span></div>
<div class="rl" style="top:818px">    <span class="t">Small</span><span class="o">,</span></div>
<div class="rl" style="top:842px">    <span class="t">Medium</span><span class="o">,</span></div>
<div class="rl" style="top:866px">    <span class="t">Large</span><span class="o">,</span> <span class="c">// New size added</span></div>
<div class="rl" style="top:890px">}</div>
<div class="rl" style="top:914px">```</div><div class="abs" style="left:0;top:48px;width:638px;height:24px;background:#2c3039"></div>
<div class="badge" style="left:26px;top:12px;width:59px;color:#b4c283">System</div>
<svg class="abs" style="left:10px;top:55px" width="6" height="10" viewBox="0 0 6 10"><path d="M1 1l4 4-4 4" fill="none" stroke="#74ade8" stroke-width="1.3" stroke-linecap="round" stroke-linejoin="round"/></svg>
<div class="badge" style="left:26px;top:48px;width:80px;color:#dce0e5"><svg style="vertical-align:-2px;margin-right:8px" width="13" height="12" viewBox="0 0 13 12"><path d="M1 1v10M4 1v10M6.5 1v10M9 1l3.5 10" fill="none" stroke="#c8ccd4" stroke-width="1.3" stroke-linecap="round" stroke-linejoin="round"/></svg>Default</div>
<div class="badge" style="left:26px;top:84px;width:35px;color:#dce0e5">You</div>
<svg class="abs" style="left:10px;top:127px" width="6" height="10" viewBox="0 0 6 10"><path d="M1 1l4 4-4 4" fill="none" stroke="#74ade8" stroke-width="1.3" stroke-linecap="round" stroke-linejoin="round"/></svg>
<div class="badge" style="left:26px;top:120px;width:93px;color:#dce0e5"><svg style="vertical-align:-2px;margin-right:7px" width="15" height="15" viewBox="0 0 14 14"><circle cx="11" cy="3" r="1.8" fill="none" stroke="#c8ccd4" stroke-width="1.3" stroke-linecap="round" stroke-linejoin="round"/><circle cx="3" cy="11" r="1.8" fill="none" stroke="#c8ccd4" stroke-width="1.3" stroke-linecap="round" stroke-linejoin="round"/><path d="M9.2 3H4a2 2 0 0 0 0 4h6a2 2 0 0 1 0 4H4.8" fill="none" stroke="#c8ccd4" stroke-width="1.3" stroke-linecap="round" stroke-linejoin="round"/></svg>Workflow</div>
<div class="badge" style="left:26px;top:492px;width:70px;color:#74ade8">Assistant</div>
<div class="abs" style="left:0;top:950px;width:638px;height:1px;background:#363c46"></div>
<svg class="abs" style="left:13px;top:964px" width="12" height="12" viewBox="0 0 12 12"><rect x=".7" y=".7" width="10.6" height="10.6" rx="2" fill="none" stroke="#c8ccd4" stroke-width="1.2" stroke-linecap="round" stroke-linejoin="round"/><path d="M4 8l4-4" fill="none" stroke="#c8ccd4" stroke-width="1.2" stroke-linecap="round" stroke-linejoin="round"/></svg>
<svg class="abs" style="left:43px;top:966px" width="12" height="9" viewBox="0 0 12 9"><path d="M.7 .7h9.5M3.5 4.5h8M3.5 8.3h8M.7 3.5v5" fill="none" stroke="#c8ccd4" stroke-width="1.2" stroke-linecap="round" stroke-linejoin="round"/></svg>
<div class="abs" style="left:560px;top:959px;width:72px;height:22px;border-radius:4px;background:#3b414d"></div>
<span class="abs ui" style="left:564px;top:959px;line-height:22px;color:#dce0e5">Send</span>
<svg class="abs" style="left:601px;top:964px" width="12" height="12" viewBox="0 0 12 12"><path d="M4.2 4.2h3.6v3.6H4.2z" fill="none" stroke="#a9afbc" stroke-width="1.0" stroke-linecap="round" stroke-linejoin="round"/><circle cx="2.6" cy="2.6" r="1.6" fill="none" stroke="#a9afbc" stroke-width="1.0" stroke-linecap="round" stroke-linejoin="round"/><circle cx="9.4" cy="2.6" r="1.6" fill="none" stroke="#a9afbc" stroke-width="1.0" stroke-linecap="round" stroke-linejoin="round"/><circle cx="2.6" cy="9.4" r="1.6" fill="none" stroke="#a9afbc" stroke-width="1.0" stroke-linecap="round" stroke-linejoin="round"/><circle cx="9.4" cy="9.4" r="1.6" fill="none" stroke="#a9afbc" stroke-width="1.0" stroke-linecap="round" stroke-linejoin="round"/></svg>
<svg class="abs" style="left:615px;top:964px" width="11" height="11" viewBox="0 0 11 11"><path d="M10 1v5.5H1.5M4.5 3.5l-3 3 3 3" fill="none" stroke="#a9afbc" stroke-width="1.1" stroke-linecap="round" stroke-linejoin="round"/></svg></div>
<div id="status"><svg class="abs" style="left:12px;top:11px" width="11" height="10" viewBox="0 0 11 10"><path d="M.8 .5v8.5h2.2M.8 4.5h2.2" fill="none" stroke="#74ade8" stroke-width="1.2" stroke-linecap="round" stroke-linejoin="round"/><rect x="4.5" y=".3" width="6" height="4" rx="1" fill="#74ade8"/><rect x="4.5" y="5.7" width="6" height="4" rx="1" fill="#74ade8"/></svg>
<svg class="abs" style="left:35px;top:12px" width="12" height="9" viewBox="0 0 12 9"><path d="M.8 .5v7.8h2.5M.8 4.2h2.5M4.5 .7h7M5 4.2h6.5M5 8h6.5" fill="none" stroke="#c8ccd4" stroke-width="1.1" stroke-linecap="round" stroke-linejoin="round"/></svg>
<svg class="abs" style="left:59px;top:11px" width="13" height="11" viewBox="0 0 13 11"><circle cx="4" cy="2.6" r="2.2" fill="#c8ccd4"/><circle cx="9.3" cy="3.2" r="1.9" fill="#c8ccd4"/><path d="M0 11c0-3 1.8-4.5 4-4.5s4 1.5 4 4.5z" fill="#c8ccd4"/><path d="M8.5 11c0-2-.5-3.2-1.3-3.9.6-.4 1.3-.6 2.1-.6 2 0 3.7 1.3 3.7 4.5z" fill="#c8ccd4"/></svg>
<svg class="abs" style="left:90px;top:11px" width="9" height="8" viewBox="0 0 9 8"><path d="M.8 4.3l2.5 2.6L8.2 1" fill="none" stroke="#c8ccd4" stroke-width="1.2" stroke-linecap="round" stroke-linejoin="round"/></svg>
<span class="abs" style="left:114px;top:3px;line-height:29px;color:#c8ccd4;font-size:12px;white-space:nowrap">Click to restart and update Zed</span>
<span class="abs" style="left:1564px;top:3px;line-height:29px;color:#c8ccd4;font-size:12px;white-space:nowrap">234:5</span>
<span class="abs" style="left:1621px;top:3px;line-height:29px;color:#c8ccd4;font-size:12px;white-space:nowrap">Rust</span>
<svg class="abs" style="left:1663px;top:9px" width="14" height="13" viewBox="0 0 14 13"><path d="M1 5.5C1 2 2.5.6 4.6.6c1 0 1.8.4 2.4 1 .6-.6 1.4-1 2.4-1C11.5.6 13 2 13 5.5v1C13.6 7 14 7.8 14 8.8 14 11.3 11 12.6 7 12.6S0 11.3 0 8.8C0 7.8.4 7 1 6.5z" fill="#c8ccd4"/><ellipse cx="4.6" cy="3.6" rx="2" ry="1.5" fill="#8d929b"/><ellipse cx="9.4" cy="3.6" rx="2" ry="1.5" fill="#8d929b"/><path d="M3 7.5h8v3.2c-1.2.6-2.6.8-4 .8s-2.8-.2-4-.8z" fill="#3b414d"/><path d="M5.5 8.3v2.4M8.5 8.3v2.4" stroke="#c8ccd4" stroke-width="1.1"/></svg>
<svg class="abs" style="left:1696px;top:10px" width="11" height="11" viewBox="0 0 11 11"><rect x="0" y="0" width="10.5" height="10.5" rx="1.8" fill="#c8ccd4"/><path d="M2.3 3.2l1.9 1.9-1.9 1.9M5 7.3h3" fill="none" stroke="#3b414d" stroke-width="1.1"/></svg>
<svg class="abs" style="left:1724px;top:8px" width="14" height="14" viewBox="0 0 14 14"><path d="M7 1.2Q8.2 5.8 12.8 7 8.2 8.2 7 12.8 5.8 8.2 1.2 7 5.8 5.8 7 1.2z" fill="#74ade8" stroke="#74ade8" stroke-width=".8" stroke-linejoin="round"/><circle cx="7" cy="7" r="1.1" fill="#3b414d"/><circle cx="2.3" cy="2.3" r="1.2" fill="#74ade8"/><circle cx="11.4" cy="11.2" r="1.2" fill="#74ade8"/></svg>
<svg class="abs" style="left:1749px;top:9px" width="13" height="13" viewBox="0 0 13 13"><circle cx="4.8" cy="4.8" r="4.3" fill="#c8ccd4"/><path d="M10.2 4.5c1.2.8 1.8 1.9 1.8 3.2 0 .8-.3 1.6-.7 2.2l.4 1.8-2-.6c-.7.4-1.6.6-2.5.6-1.4 0-2.6-.6-3.4-1.5" fill="none" stroke="#c8ccd4" stroke-width="1.1" stroke-linejoin="round"/></svg>
<svg class="abs" style="left:1775px;top:9px" width="9" height="12" viewBox="0 0 9 12"><path d="M4.5 1.2c2 0 3 1.4 3 3.3v3l1 1.5H.5l1-1.5v-3c0-1.9 1-3.3 3-3.3zM3.3 10.5a1.3 1.3 0 0 0 2.4 0" fill="none" stroke="#c8ccd4" stroke-width="1.1" stroke-linecap="round" stroke-linejoin="round"/></svg></div>
</body></html>
